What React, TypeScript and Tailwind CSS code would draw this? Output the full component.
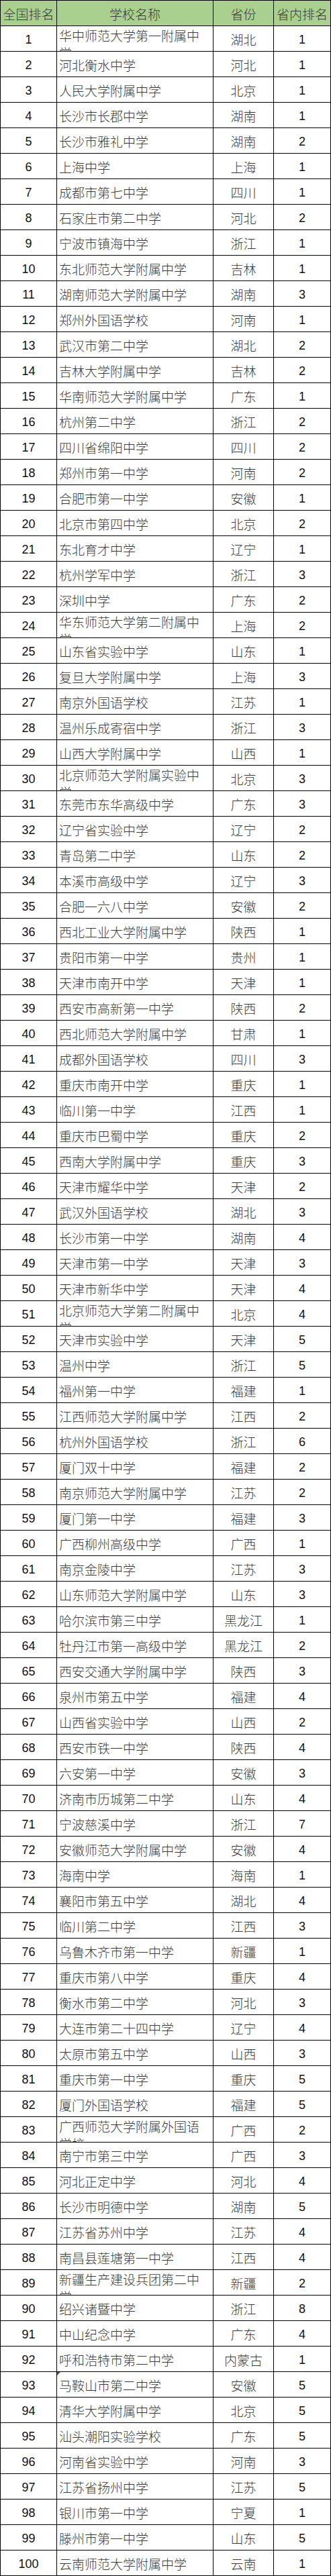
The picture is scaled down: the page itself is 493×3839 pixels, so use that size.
type School = [number, string, string, number];

// 全国排名, 学校名称, 省份, 省内排名
const SCHOOLS: School[] = [
  [1, "华中师范大学第一附属中学", "湖北", 1],
  [2, "河北衡水中学", "河北", 1],
  [3, "人民大学附属中学", "北京", 1],
  [4, "长沙市长郡中学", "湖南", 1],
  [5, "长沙市雅礼中学", "湖南", 2],
  [6, "上海中学", "上海", 1],
  [7, "成都市第七中学", "四川", 1],
  [8, "石家庄市第二中学", "河北", 2],
  [9, "宁波市镇海中学", "浙江", 1],
  [10, "东北师范大学附属中学", "吉林", 1],
  [11, "湖南师范大学附属中学", "湖南", 3],
  [12, "郑州外国语学校", "河南", 1],
  [13, "武汉市第二中学", "湖北", 2],
  [14, "吉林大学附属中学", "吉林", 2],
  [15, "华南师范大学附属中学", "广东", 1],
  [16, "杭州第二中学", "浙江", 2],
  [17, "四川省绵阳中学", "四川", 2],
  [18, "郑州市第一中学", "河南", 2],
  [19, "合肥市第一中学", "安徽", 1],
  [20, "北京市第四中学", "北京", 2],
  [21, "东北育才中学", "辽宁", 1],
  [22, "杭州学军中学", "浙江", 3],
  [23, "深圳中学", "广东", 2],
  [24, "华东师范大学第二附属中学", "上海", 2],
  [25, "山东省实验中学", "山东", 1],
  [26, "复旦大学附属中学", "上海", 3],
  [27, "南京外国语学校", "江苏", 1],
  [28, "温州乐成寄宿中学", "浙江", 3],
  [29, "山西大学附属中学", "山西", 1],
  [30, "北京师范大学附属实验中学", "北京", 3],
  [31, "东莞市东华高级中学", "广东", 3],
  [32, "辽宁省实验中学", "辽宁", 2],
  [33, "青岛第二中学", "山东", 2],
  [34, "本溪市高级中学", "辽宁", 3],
  [35, "合肥一六八中学", "安徽", 2],
  [36, "西北工业大学附属中学", "陕西", 1],
  [37, "贵阳市第一中学", "贵州", 1],
  [38, "天津市南开中学", "天津", 1],
  [39, "西安市高新第一中学", "陕西", 2],
  [40, "西北师范大学附属中学", "甘肃", 1],
  [41, "成都外国语学校", "四川", 3],
  [42, "重庆市南开中学", "重庆", 1],
  [43, "临川第一中学", "江西", 1],
  [44, "重庆市巴蜀中学", "重庆", 2],
  [45, "西南大学附属中学", "重庆", 3],
  [46, "天津市耀华中学", "天津", 2],
  [47, "武汉外国语学校", "湖北", 3],
  [48, "长沙市第一中学", "湖南", 4],
  [49, "天津市第一中学", "天津", 3],
  [50, "天津市新华中学", "天津", 4],
  [51, "北京师范大学第二附属中学", "北京", 4],
  [52, "天津市实验中学", "天津", 5],
  [53, "温州中学", "浙江", 5],
  [54, "福州第一中学", "福建", 1],
  [55, "江西师范大学附属中学", "江西", 2],
  [56, "杭州外国语学校", "浙江", 6],
  [57, "厦门双十中学", "福建", 2],
  [58, "南京师范大学附属中学", "江苏", 2],
  [59, "厦门第一中学", "福建", 3],
  [60, "广西柳州高级中学", "广西", 1],
  [61, "南京金陵中学", "江苏", 3],
  [62, "山东师范大学附属中学", "山东", 3],
  [63, "哈尔滨市第三中学", "黑龙江", 1],
  [64, "牡丹江市第一高级中学", "黑龙江", 2],
  [65, "西安交通大学附属中学", "陕西", 3],
  [66, "泉州市第五中学", "福建", 4],
  [67, "山西省实验中学", "山西", 2],
  [68, "西安市铁一中学", "陕西", 4],
  [69, "六安第一中学", "安徽", 3],
  [70, "济南市历城第二中学", "山东", 4],
  [71, "宁波慈溪中学", "浙江", 7],
  [72, "安徽师范大学附属中学", "安徽", 4],
  [73, "海南中学", "海南", 1],
  [74, "襄阳市第五中学", "湖北", 4],
  [75, "临川第二中学", "江西", 3],
  [76, "乌鲁木齐市第一中学", "新疆", 1],
  [77, "重庆市第八中学", "重庆", 4],
  [78, "衡水市第二中学", "河北", 3],
  [79, "大连市第二十四中学", "辽宁", 4],
  [80, "太原市第五中学", "山西", 3],
  [81, "重庆市第一中学", "重庆", 5],
  [82, "厦门外国语学校", "福建", 5],
  [83, "广西师范大学附属外国语学校", "广西", 2],
  [84, "南宁市第三中学", "广西", 3],
  [85, "河北正定中学", "河北", 4],
  [86, "长沙市明德中学", "湖南", 5],
  [87, "江苏省苏州中学", "江苏", 4],
  [88, "南昌县莲塘第一中学", "江西", 4],
  [89, "新疆生产建设兵团第二中学", "新疆", 2],
  [90, "绍兴诸暨中学", "浙江", 8],
  [91, "中山纪念中学", "广东", 4],
  [92, "呼和浩特市第二中学", "内蒙古", 1],
  [93, "马鞍山市第二中学", "安徽", 5],
  [94, "清华大学附属中学", "北京", 5],
  [95, "汕头潮阳实验学校", "广东", 5],
  [96, "河南省实验中学", "河南", 3],
  [97, "江苏省扬州中学", "江苏", 5],
  [98, "银川市第一中学", "宁夏", 1],
  [99, "滕州市第一中学", "山东", 5],
  [100, "云南师范大学附属中学", "云南", 1],
];

const cjk = "font-['Noto_Sans_CJK_SC',sans-serif] text-[19px] font-light text-[#3a3a3a]";
const num = "font-['Liberation_Sans',Arial,sans-serif] text-[18px] text-[#111]";
const cell = "h-[38px] border-r border-b border-black";
const row = "grid grid-cols-[84px_233px_90px_85px]";

function Row({ school }: { school: School }) {
  const [rank, name, province, provRank] = school;
  // names longer than 11 characters wrap, and the second line gets clipped
  const wraps = name.length > 11;

  return (
    <div className={row}>
      <div className={`${cell} ${num} flex items-center justify-center pt-[3px]`}>{rank}</div>
      <div className={`${cell} relative overflow-hidden`}>
        {rank === 93 ? (
          <span className="absolute left-0 top-0 h-0 w-0 border-t-[5px] border-r-[5px] border-t-[#4b5a44] border-r-transparent" />
        ) : null}
        <div
          className={`${cjk} pl-[3px] pr-[8px] leading-[26px] ${wraps ? "pt-[1px]" : "pt-[7px]"}`}
        >
          {name}
        </div>
      </div>
      <div className={`${cell} ${cjk} flex items-center justify-center pt-[4px]`}>{province}</div>
      <div className={`${cell} ${num} flex items-center justify-center pt-[3px]`}>{provRank}</div>
    </div>
  );
}

export default function App() {
  return (
    <div className="w-[493px] border-l border-t border-black bg-white">
      <div className={`${row} bg-[#a9d08e]`}>
        {["全国排名", "学校名称", "省份", "省内排名"].map((label) => (
          <div key={label} className={`${cell} ${cjk} flex items-center justify-center pt-[3px]`}>
            {label}
          </div>
        ))}
      </div>
      {SCHOOLS.map((school) => (
        <Row key={school[0]} school={school} />
      ))}
    </div>
  );
}
